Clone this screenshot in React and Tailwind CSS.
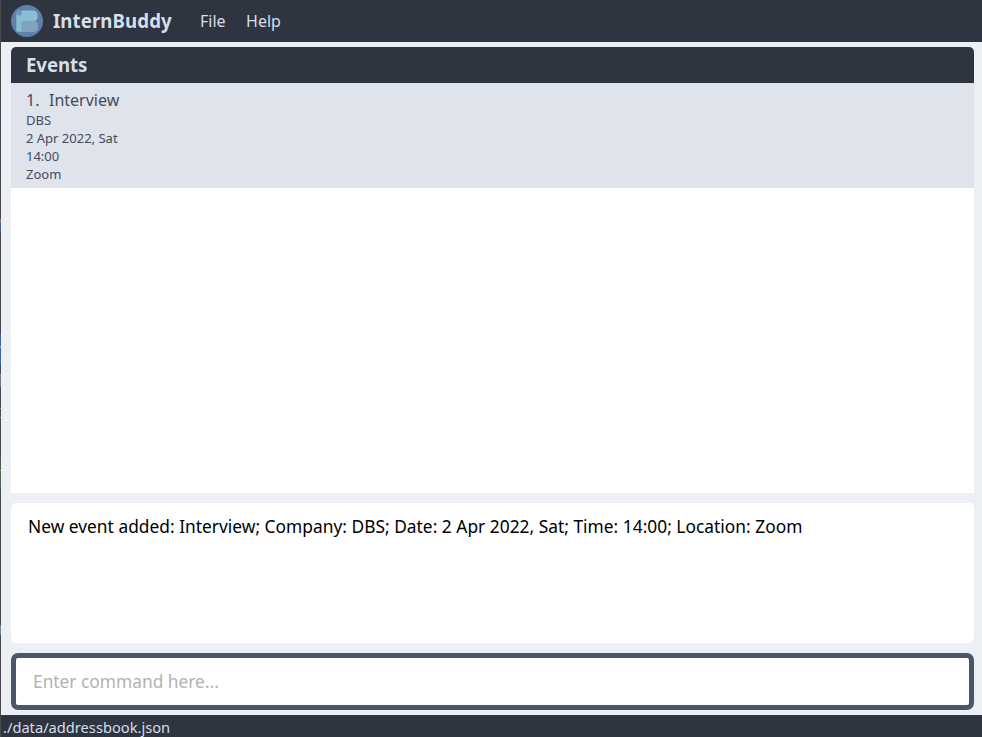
const edgeMarks = [
  { id: 'a', height: 'h-[219px]', color: 'bg-[#4a494c]' },
  { id: 'b', height: 'h-[4px]', color: 'bg-[#8a7468]' },
  { id: 'c', height: 'h-[9px]', color: 'bg-[#44619c]' },
  { id: 'd', height: 'h-[102px]', color: 'bg-[#4a494c]' },
  { id: 'e', height: 'h-[12px]', color: 'bg-[#3c63b0]' },
  { id: 'f', height: 'h-[2px]', color: 'bg-[#7d97c8]' },
  { id: 'g', height: 'h-[17px]', color: 'bg-[#3c63b0]' },
  { id: 'h', height: 'h-[9px]', color: 'bg-[#4a494c]' },
  { id: 'i', height: 'h-[3px]', color: 'bg-[#958276]' },
  { id: 'j', height: 'h-[10px]', color: 'bg-[#5b7a92]' },
  { id: 'k', height: 'h-[21px]', color: 'bg-[#4a494c]' },
  { id: 'l', height: 'h-[1px]', color: 'bg-[#909090]' },
  { id: 'm', height: 'h-[8px]', color: 'bg-[#4a494c]' },
  { id: 'n', height: 'h-[1px]', color: 'bg-[#909090]' },
  { id: 'o', height: 'h-[40px]', color: 'bg-[#4a494c]' },
  { id: 'p', height: 'h-[12px]', color: 'bg-[#4d5c50]' },
  { id: 'q', height: 'h-[1px]', color: 'bg-[#b0a860]' },
  { id: 'r', height: 'h-[18px]', color: 'bg-[#4d6154]' },
  { id: 's', height: 'h-[136px]', color: 'bg-[#4a494c]' },
  { id: 't', height: 'h-[10px]', color: 'bg-[#71839c]' },
  { id: 'u', height: 'h-[102px]', color: 'bg-[#4a494c]' },
];

function Logo() {
  return (
    <svg className="size-8 shrink-0" viewBox="0 0 32 32">
      <circle cx="16" cy="16" r="16" fill="#5e81ac" />
      <path d="M10 16h13a4 4 0 0 1 4 4v3a4 4 0 0 1-4 4H5.500l4.500-1z" fill="#81a1c1" />
      <path d="M8 5.500h14a4.500 4.500 0 0 1 4.500 4.500v2a4 4 0 0 1-4 4H13a2.500 2.500 0 0 0-2.500 2.500v7.500l-1 .5H5.300V8z" fill="#88c0d0" />
      <rect x="5.500" y="5" width="5.500" height="5.500" rx="2" fill="#7397bb" />
    </svg>
  );
}

function MenuBar() {
  return (
    <header className="flex h-[42px] shrink-0 items-center bg-[#2e3440] pl-2.5 text-[#d8dee9]">
      <Logo />
      <h1 className="ml-2.5 w-[147px] text-[18.670px] font-bold tracking-[0.080px]">InternBuddy</h1>
      <nav className="flex gap-[20.500px] text-[16px]">
        <span>File</span>
        <span>Help</span>
      </nav>
    </header>
  );
}

function EventRow({ index, name, details }) {
  return (
    <div className="h-[105px] bg-[#dfe3ec] pt-1.5 pl-[15px] text-[#434c5e]">
      <div className="flex h-[22px] items-start text-[16px] leading-[22px]">
        <span className="w-[23px]">{index}.</span>
        <span>{name}</span>
      </div>
      {details.map((line) => (
        <div key={line} className="h-[18px] text-[13px] leading-[18px]">{line}</div>
      ))}
    </div>
  );
}

export default function App() {
  return (
    <div className="flex h-[737px] w-[982px] overflow-hidden whitespace-nowrap font-['Noto_Sans',sans-serif]">
      <div className="w-px shrink-0">
        {edgeMarks.map((m) => (
          <div key={m.id} className={`${m.height} ${m.color}`} />
        ))}
      </div>
      <div className="flex flex-1 flex-col bg-[#eceff4]">
        <MenuBar />
        <main className="flex flex-1 flex-col gap-2.5 pt-[5px] pr-2 pb-[5px] pl-2.5">
          <section className="h-[446px] overflow-hidden rounded-t-[5px] rounded-b-[1px] bg-white">
            <h2 className="flex h-9 items-center bg-[#2e3440] pl-[15px] text-[18.670px] font-bold tracking-[-0.080px] text-[#d8dee9]">Events</h2>
            <EventRow index={1} name="Interview" details={['DBS', '2 Apr 2022, Sat', '14:00', 'Zoom']} />
          </section>
          <section className="h-[140px] rounded-[5px] bg-white pt-[11px] pl-[17px] text-[17.330px] leading-6 tracking-[0.020px] text-black">
            New event added: Interview; Company: DBS; Date: 2 Apr 2022, Sat; Time: 14:00; Location: Zoom
          </section>
          <input
            className="h-[57px] w-full rounded-[7px] border-[5px] border-[#4c566a] bg-white pb-0.5 pl-[17px] text-[17.330px] outline-none placeholder:text-[#b2b2b2]"
            placeholder="Enter command here..."
          />
        </main>
        <footer className="flex h-[22px] shrink-0 items-center bg-[#2e3440] pt-px pl-0.5 text-[14.670px] text-[#d8dee9]">
          ./data/addressbook.json
        </footer>
      </div>
    </div>
  );
}
